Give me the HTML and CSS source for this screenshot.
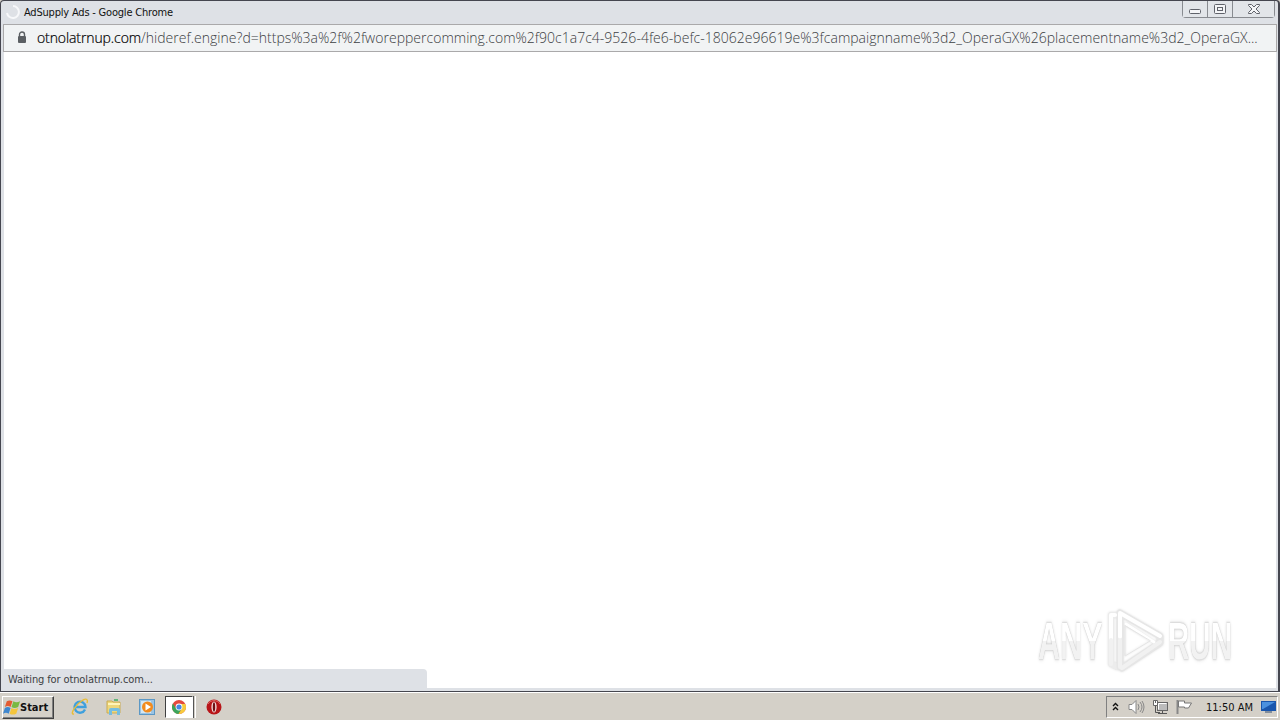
FILE: index.html
```html
<!DOCTYPE html>
<html lang="en">
<head>
  <meta charset="UTF-8">
  <title>AdSupply Ads - Google Chrome</title>
  <link rel="stylesheet" href="styles.css">
</head>
<body>
  <div class="window">
    <header class="titlebar">
      <svg class="spinner" width="16" height="16" viewBox="0 0 16 16"><path d="M8 2a6 6 0 1 1-6 7" /></svg>
      <span class="title">AdSupply Ads - Google Chrome</span>
      <div class="controls">
        <button class="control" aria-label="Minimize"><svg width="14" height="14" viewBox="0 0 14 14"><rect x="1.5" y="7.5" width="11" height="4" rx="1" /></svg></button>
        <button class="control" aria-label="Maximize"><svg width="14" height="14" viewBox="0 0 14 14"><rect x="1.5" y="2.500" width="11" height="9" rx="1" /><rect x="4.500" y="5.500" width="5" height="3" /></svg></button>
        <button class="control close" aria-label="Close"><svg width="14" height="14" viewBox="0 0 14 14"><path d="M1.500 2.500h3L7 5l2.500-2.500h3v1L9 7l3.500 3.500v1h-3L7 9l-2.500 2.500h-3v-1L5 7 1.500 3.500z" /></svg></button>
      </div>
    </header>

    <div class="address">
      <svg class="lock" width="10" height="13" viewBox="0 0 10 13"><path d="M2.500 5V3.500a2.500 2.500 0 0 1 5 0V5" fill="none" stroke="#5b5f63" stroke-width="1.400" /><rect x="1" y="5" width="8" height="7" rx="1" fill="#5b5f63" /></svg>
      <span class="domain">otnolatrnup.com</span><span class="path">/hideref.engine?d=https%3a%2f%2fworeppercomming.com%2f90c1a7c4-9526-4fe6-befc-18062e96619e%3fcampaignname%3d2_OperaGX%26placementname%3d2_OperaGX...</span>
    </div>

    <main class="page">
      <div class="watermark">
        <span class="word any">ANY</span>
        <svg width="60" height="66" viewBox="0 0 60 66">
          <g fill="none" stroke-linejoin="round" stroke-linecap="round">
            <path d="M10 8H6v49l6 3" stroke="#ececec" stroke-width="6" />
            <path d="M15 6v54M15 6l40 23v7L17 61" stroke="#e6e6e6" stroke-width="7" />
            <path d="M10 8H6v24M15 30V6l40 23" stroke="#fff" stroke-width="4" />
            <path d="M21 17l28 18" stroke="#fff" stroke-width="3" />
            <path d="M55 35L17 61M6 33v24M15 33v27" stroke="#f1f1f1" stroke-width="4" />
            <path d="M20 19v30l25-15z" stroke="#e5e5e5" />
          </g>
        </svg>
        <span class="word run">RUN</span>
      </div>
      <div class="status">Waiting for otnolatrnup.com...</div>
    </main>
  </div>

  <footer class="taskbar">
    <button class="start">
      <svg width="18" height="17" viewBox="0 0 19 17">
        <path d="M4 2q3-2 6 0L8 8Q5 6 2 8z" fill="#e45b32" />
        <path d="M11 2q3 2 7 0l-2 6q-4 2-7 0z" fill="#79b943" />
        <path d="M2 9q3-2 6 0l-2 6q-3-2-6 0z" fill="#3f87cf" />
        <path d="M9 9q3 2 7 0l-2 6q-4 2-7 0z" fill="#f4c53c" />
      </svg>
      <span>Start</span>
    </button>
    <nav class="launch">
      <span class="app ie">
        <svg width="18" height="18" viewBox="0 0 18 18"><path d="M14 11.500A5.500 5.500 0 1 1 14.500 9H5" fill="none" stroke="#3fa0dd" stroke-width="2.400" /><path d="M3 16c-5 1 2-10 9-14 4-2 5 0 4 3" fill="none" stroke="#e9bd37" stroke-width="1.400" /></svg>
      </span>
      <span class="app explorer">
        <svg width="18" height="18" viewBox="0 0 18 18"><path d="M2 3h5l1 1h7v11H2z" fill="#eed77b" stroke="#c9ac55" /><path d="M3 6h12" stroke="#fff4b8" stroke-width="2" /><path d="M9 2h4" stroke="#63b77a" stroke-width="2" /><path d="M4 17v-5q0-2 2-2h7q2 0 2 2v5h-3v-4H7v4z" fill="#75bde0" /></svg>
      </span>
      <span class="app media">
        <svg width="17" height="17" viewBox="0 0 17 17"><rect x=".5" y=".5" width="15" height="15" fill="#9ac4e4" stroke="#5c98c5" /><rect x="2" y="2" width="10" height="12" fill="#d4e7f3" /><circle cx="8.500" cy="8" r="5.500" fill="#f28b1d" /><path d="M6.500 4.500L12 8l-5.500 3.500z" fill="#fff" /></svg>
      </span>
      <span class="app active">
        <svg width="14" height="14" viewBox="0 0 14 14"><circle cx="7" cy="7" r="7" fill="#e34b3e" /><path d="M.900 3.500A7 7 0 0 0 6.500 14L9.500 9 7 7 4 8.500z" fill="#3ba55a" /><path d="M7 4h6.300A7 7 0 0 1 6.500 14L10 8.500z" fill="#f7cb3b" /><circle cx="7" cy="7" r="3.400" fill="#fff" /><circle cx="7" cy="7" r="2.600" fill="#4588e5" /></svg>
      </span>
      <span class="stack"></span>
      <span class="app opera">
        <svg width="16" height="16" viewBox="0 0 16 16"><circle cx="8" cy="8" r="7.500" fill="#b81518" /><path d="M2 5a7 7 0 0 1 12 0" fill="none" stroke="#df6a65" /><ellipse cx="8" cy="8" rx="2.600" ry="5.600" fill="#f5dddb" /><ellipse cx="8" cy="8" rx="1.200" ry="4.700" fill="#701014" /></svg>
      </span>
    </nav>
    <div class="tray">
      <svg class="chevrons" width="7" height="10" viewBox="0 0 7 10"><path d="M1 4l2.500-2.500L6 4M1 8l2.500-2.500L6 8" fill="none" stroke="#111" stroke-width="1.400" /></svg>
      <svg class="speaker" width="17" height="16" viewBox="0 0 17 16"><path d="M1 5.500h3l4-4v13l-4-4H1z" fill="#fff" stroke="#888" /><path d="M10 5q2 3 0 6M12 3q4 5 0 10M14 2q4 6 0 12" fill="none" stroke="#888" /></svg>
      <svg class="network" width="17" height="16" viewBox="0 0 17 16"><rect x="5.500" y="3.500" width="10" height="8" fill="#bbb" stroke="#666" /><path d="M6.500 10.500v-6h8" fill="none" stroke="#fff" /><path d="M6 14.500h9M10.500 12v2M3.500 6v7.500H8" fill="none" stroke="#555" /><path d="M1.500 1.500h4v5h-4z" fill="#fff" stroke="#666" /><path d="M3.500 1v3" stroke="#666" /></svg>
      <svg class="flag" width="17" height="16" viewBox="0 0 17 16"><path d="M1.500 1v14" stroke="#888" stroke-width="2" /><path d="M2.500 2h6v2h7l-3 5h-4V8h-6z" fill="#fff" stroke="#777" /></svg>
      <time>11:50 AM</time>
      <svg class="desktop" width="16" height="14" viewBox="0 0 16 14"><path d="M0 1h15v10H0z" fill="#1956ad" /><path d="M1 2h13L2 9H1z" fill="#4b91df" /><path d="M4 12h7" stroke="#304c72" /></svg>
    </div>
  </footer>
</body>
</html>
```
FILE: styles.css
```css
* {
  box-sizing: border-box;
}

body {
  display: flex;
  flex-direction: column;
  width: 1280px;
  height: 720px;
  margin: 0;
  overflow: hidden;
  background: #d4d0c8;
  color: #111;
  font-family: "DejaVu Sans Condensed", "DejaVu Sans", sans-serif;
  font-size: 11px;
}

svg {
  display: block;
  flex: none;
}

button {
  margin: 0;
  padding: 0;
  color: inherit;
  font: inherit;
}

.window {
  display: flex;
  flex-direction: column;
  height: 692px;
  padding: 0 1px 3px 2px;
  background: #dee1e6;
  border: 1px solid #45464f;
  border-right-width: 2px;
  border-radius: 4px 4px 0 0;
}

.titlebar {
  display: flex;
  height: 23px;
  padding: 0 2px;
}

.spinner {
  margin-top: 3px;
  fill: none;
  stroke: #f7f8fa;
  stroke-width: 2;
}

.title {
  margin: 4px 0 0 3px;
  line-height: 15px;
  letter-spacing: -0.2px;
}

.controls {
  display: flex;
  height: 17px;
  margin-left: auto;
  border: 1px solid #888b90;
  border-top: 0;
  border-radius: 0 0 4px 4px;
}

.control {
  display: flex;
  justify-content: center;
  align-items: center;
  width: 25px;
  background: #e2e5e9;
  border: 0;
  border-right: 1px solid #888b90;
}

.control svg {
  fill: #f4f5f7;
  stroke: #60636b;
}

.close {
  width: 41px;
  border-right: 0;
}

.address {
  display: flex;
  align-items: center;
  height: 28px;
  padding: 0 0 1px 13px;
  background: #f1f3f4;
  border: 1px solid #aaa9aa;
  font-family: "Open Sans", sans-serif;
  font-size: 14px;
  white-space: nowrap;
}

.lock {
  margin-right: 10px;
}

.domain {
  color: #000;
  font-weight: 300;
  letter-spacing: -0.1px;
  -webkit-text-stroke: 0.2px #000;
}

.path {
  color: #3c4043;
  font-weight: 300;
  letter-spacing: 0.014px;
}

.page {
  display: flex;
  flex: 1;
  flex-direction: column;
  justify-content: flex-end;
  position: relative;
  margin: 0 1px;
  background: #fff;
}

.status {
  width: 423px;
  height: 19px;
  padding-left: 4px;
  background: #dee1e6;
  border-radius: 0 4px 0 0;
  color: #3c4043;
  line-height: 21px;
  letter-spacing: -0.12px;
}

.watermark {
  display: flex;
  align-items: center;
  position: absolute;
  right: 44px;
  bottom: 15px;
  height: 66px;
  font-family: "Liberation Sans", sans-serif;
  font-size: 51px;
  font-weight: bold;
}

.word {
  background: linear-gradient(#fff 50%, #f2f2f2 50%);
  background-clip: text;
  -webkit-background-clip: text;
  color: transparent;
  filter: drop-shadow(0 0 1px #bbb) drop-shadow(0 0 2px #ddd);
  transform-origin: left;
}

/* the letters are squeezed, so the box has to be as wide as the unscaled word */
.any {
  width: 108px;
  margin-right: -44px;
  transform: translateY(1px) scaleX(0.6);
}

.run {
  width: 112px;
  margin-right: -48px;
  transform: translateY(1px) scaleX(0.58);
}

.watermark svg {
  margin: 0 3px;
  filter: drop-shadow(0 0 1px #ddd);
}

.taskbar {
  display: flex;
  height: 28px;
  padding: 3px 2px 1px;
  border-top: 1px solid #fff;
}

.start {
  display: flex;
  align-items: center;
  width: 52px;
  height: 23px;
  background: #d4d0c8;
  border: 1px solid #404040;
  border-top-color: #fff;
  border-left-color: #fff;
  box-shadow: inset -1px -1px #808080;
  font-size: 11px;
  font-weight: bold;
}

.start span {
  margin-left: -1px;
}

.launch {
  display: flex;
  align-items: center;
  height: 22px;
  margin-left: 17px;
}

.app {
  margin-right: 16px;
}

.media {
  margin-right: 9px;
}

.active {
  display: flex;
  justify-content: center;
  align-items: center;
  width: 28px;
  height: 22px;
  margin-right: 0;
  background: #fff;
  border: 1px solid #404040;
  border-right-color: #fff;
  border-bottom-color: #fff;
}

.stack {
  width: 3px;
  height: 22px;
  margin-right: 10px;
  border-right: 1px solid #fff;
  border-left: 1px solid #555;
}

.tray {
  display: flex;
  align-items: center;
  width: 172px;
  height: 22px;
  margin-left: auto;
  padding-left: 5px;
  border: 1px solid #808080;
  border-right-color: #fff;
  border-bottom-color: #fff;
}

.speaker {
  margin-left: 9px;
}

.network,
.flag {
  margin-left: 7px;
}

.tray time {
  margin-left: 13px;
  white-space: nowrap;
}

.desktop {
  margin-left: auto;
}
```
